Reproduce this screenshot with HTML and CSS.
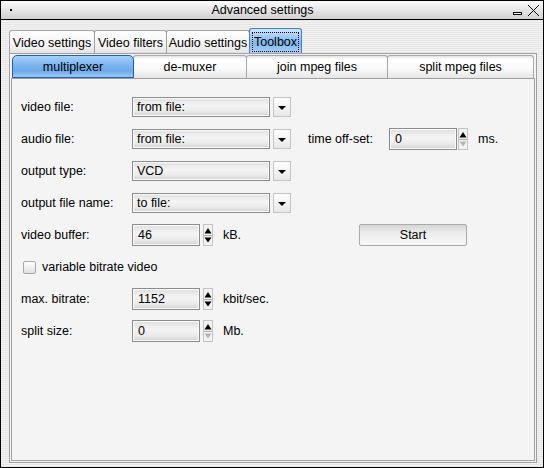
FILE: index.html
```html
<!DOCTYPE html>
<html>
<head>
<meta charset="utf-8">
<link rel="stylesheet" href="styles.css">
</head>
<body>
<div class="window">
  <div class="titlebar">
    <div class="tb-left"><span class="dot"></span></div>
    <div class="title">Advanced settings</div>
    <div class="tb-right">
      <svg width="30" height="18" viewBox="0 0 30 18">
        <rect x="3.5" y="11.5" width="8" height="2" fill="#fff" stroke="#000"/>
        <line x1="18" y1="4" x2="29" y2="15" stroke="#000" stroke-width="1"/>
        <line x1="29" y1="4" x2="18" y2="15" stroke="#000" stroke-width="1"/>
      </svg>
    </div>
  </div>
  <div class="body">
    <div class="tabs">
      <div class="tab t1">Video settings</div>
      <div class="tab t2">Video filters</div>
      <div class="tab t3">Audio settings</div>
      <div class="tab t4 sel"><span class="focus">Toolbox</span></div>
    </div>
    <div class="pane">
      <div class="subtabs">
        <div class="stab s1 sel">multiplexer</div>
        <div class="stab s2">de-muxer</div>
        <div class="stab s3">join mpeg files</div>
        <div class="stab s4">split mpeg files</div>
      </div>
      <div class="content">
        <div class="row">
          <div class="lbl">video file:</div>
          <div class="c1">
            <div class="field cfield">from file:</div>
            <div class="drop"><span class="tri"></span></div>
          </div>
        </div>
        <div class="row">
          <div class="lbl">audio file:</div>
          <div class="c1">
            <div class="field cfield">from file:</div>
            <div class="drop"><span class="tri"></span></div>
          </div>
          <div class="lbl2">time off-set:</div>
          <div class="field sfield">0</div>
          <svg class="spin tight" width="10" height="22" viewBox="0 0 10 22">
            <rect x="0.5" y="0.5" width="9" height="21" fill="#f2f2f2" stroke="#c4c4c4"/>
            <polygon points="1.5,9.5 5,4 8.5,9.5" fill="#000"/>
            <line x1="1" y1="11.5" x2="9" y2="11.5" stroke="#b0b0b0"/>
            <polygon points="1.5,13.5 8.5,13.5 5,18.5" fill="#b4b4b4"/>
          </svg>
          <div class="unit">ms.</div>
        </div>
        <div class="row">
          <div class="lbl">output type:</div>
          <div class="c1">
            <div class="field cfield">VCD</div>
            <div class="drop"><span class="tri"></span></div>
          </div>
        </div>
        <div class="row">
          <div class="lbl">output file name:</div>
          <div class="c1">
            <div class="field cfield">to file:</div>
            <div class="drop"><span class="tri"></span></div>
          </div>
        </div>
        <div class="row">
          <div class="lbl">video buffer:</div>
          <div class="c1">
            <div class="field sfield">46</div>
            <svg class="spin" width="10" height="22" viewBox="0 0 10 22">
              <rect x="0.5" y="0.5" width="9" height="21" fill="#f2f2f2" stroke="#c4c4c4"/>
              <polygon points="1.5,9.5 5,4 8.5,9.5" fill="#000"/>
              <line x1="1" y1="11.5" x2="9" y2="11.5" stroke="#b0b0b0"/>
              <polygon points="1.5,13.5 8.5,13.5 5,18.5" fill="#000"/>
            </svg>
            <div class="unit">kB.</div>
          </div>
          <div class="start">Start</div>
        </div>
        <div class="row">
          <span class="check"></span>
          <span>variable bitrate video</span>
        </div>
        <div class="row">
          <div class="lbl">max. bitrate:</div>
          <div class="field sfield">1152</div>
          <svg class="spin" width="10" height="22" viewBox="0 0 10 22">
            <rect x="0.5" y="0.5" width="9" height="21" fill="#f2f2f2" stroke="#c4c4c4"/>
            <polygon points="1.5,9.5 5,4 8.5,9.5" fill="#000"/>
            <line x1="1" y1="11.5" x2="9" y2="11.5" stroke="#b0b0b0"/>
            <polygon points="1.5,13.5 8.5,13.5 5,18.5" fill="#000"/>
          </svg>
          <div class="unit">kbit/sec.</div>
        </div>
        <div class="row">
          <div class="lbl">split size:</div>
          <div class="field sfield">0</div>
          <svg class="spin" width="10" height="22" viewBox="0 0 10 22">
            <rect x="0.5" y="0.5" width="9" height="21" fill="#f2f2f2" stroke="#c4c4c4"/>
            <polygon points="1.5,9.5 5,4 8.5,9.5" fill="#000"/>
            <line x1="1" y1="11.5" x2="9" y2="11.5" stroke="#b0b0b0"/>
            <polygon points="1.5,13.5 8.5,13.5 5,18.5" fill="#b4b4b4"/>
          </svg>
          <div class="unit">Mb.</div>
        </div>
      </div>
    </div>
  </div>
</div>
</body>
</html>
```
FILE: styles.css
```css
html, body {
  margin: 0;
  padding: 0;
}
body {
  font-family: "Liberation Sans", Arial, sans-serif;
  font-size: 12.5px;
  color: #000;
}
.window {
  width: 544px;
  height: 468px;
  box-sizing: border-box;
  border: 1px solid #000;
  display: flex;
  flex-direction: column;
  background: repeating-linear-gradient(180deg, #f3f3f3 0 1px, #e5e5e5 1px 2px);
}
.titlebar {
  height: 18px;
  border-bottom: 1px solid #000;
  background: linear-gradient(#fcfcfc, #d0d0d0);
  display: flex;
  align-items: center;
  flex: none;
}
.tb-left {
  width: 20px;
  display: flex;
  align-items: center;
}
.dot {
  width: 2px;
  height: 2px;
  background: #000;
  margin-left: 9px;
}
.title {
  flex: 1;
  text-align: center;
  line-height: 18px;
}
.tb-right {
  width: 39px;
  height: 18px;
  display: flex;
  justify-content: flex-end;
  padding-right: 3px;
  box-sizing: border-box;
}
.tb-right svg {
  display: block;
}
.body {
  flex: 1;
  display: flex;
  flex-direction: column;
  padding: 8px 6px 4px 8px;
  min-height: 0;
}
.tabs {
  display: flex;
  align-items: flex-end;
  height: 25px;
  flex: none;
}
.tab {
  height: 23px;
  box-sizing: border-box;
  border: 1px solid #a0a0a0;
  border-bottom: none;
  border-radius: 3px 3px 0 0;
  background: linear-gradient(#ffffff, #f4f4f4 60%, #e4e4e4);
  display: flex;
  align-items: center;
  justify-content: center;
  margin-right: -1px;
  padding-top: 1px;
}
.t1 { width: 86px; }
.t2 { width: 73px; }
.t3 { width: 84px; }
.t4 { width: 53px; }
.tab.sel {
  height: 25px;
  border-color: #3f7fd6;
  background: linear-gradient(#d4e8fd, #a2ccf6 30%, #80b8f0 60%, #a8d2fa);
  position: relative;
}
.focus {
  border: 1px dotted #000;
  padding: 2px 1px 2px 1px;
  line-height: 14px;
}
.pane {
  flex: 1;
  border: 1px solid #a0a0a0;
  padding: 1px;
  background: #f4f4f4;
  display: flex;
  flex-direction: column;
  min-height: 0;
}
.subtabs {
  display: flex;
  height: 23px;
  padding-left: 1px;
  flex: none;
}
.stab {
  height: 23px;
  box-sizing: border-box;
  border: 1px solid #a8a8a8;
  border-bottom: none;
  border-radius: 3px 3px 0 0;
  background: linear-gradient(#e0e0e0, #ffffff 3px, #fbfbfb 55%, #e6e6e6);
  display: flex;
  align-items: center;
  justify-content: center;
  margin-right: -1px;
}
.s1 { width: 122px; }
.s2 { width: 114px; }
.s3 { width: 142px; }
.s4 { width: 147px; }
.stab.sel {
  border: 1px solid #1f5bc4;
  border-radius: 5px 5px 0 0;
  background: linear-gradient(#a8d0f8, #7ab4ef 45%, #6ea8ea 70%, #9ccaf6);
  position: relative;
  z-index: 1;
}
.content {
  flex: 1;
  border: 1px solid #a0a0a0;
  padding: 17px 0 0 9px;
  display: flex;
  flex-direction: column;
  gap: 10px;
}
.row {
  display: flex;
  align-items: center;
  height: 22px;
}
.lbl {
  width: 111px;
  flex: none;
}
.c1 {
  width: 160px;
  display: flex;
  align-items: center;
  flex: none;
}
.field {
  box-sizing: border-box;
  border: 1px solid #8c8c8c;
  box-shadow: inset 0 0 0 1px #fbfbfb;
  background: linear-gradient(#dedede, #f4f4f4 40%, #ececec 70%, #d4d4d4);
  padding-left: 4px;
  display: flex;
  align-items: center;
  flex: none;
}
.cfield {
  width: 138px;
  height: 20px;
}
.sfield {
  width: 68px;
  height: 22px;
  padding-left: 5px;
}
.drop {
  width: 18px;
  height: 20px;
  box-sizing: border-box;
  margin-left: 3px;
  border: 1px solid #c4c4c4;
  background: linear-gradient(#ffffff, #e8e8e8);
  display: flex;
  align-items: center;
  justify-content: center;
}
.tri {
  width: 0;
  height: 0;
  border-left: 4px solid transparent;
  border-right: 4px solid transparent;
  border-top: 4px solid #000;
  margin-top: 1px;
}
.spin {
  display: block;
  margin-left: 3px;
  flex: none;
}
.spin.tight {
  margin-left: 1px;
}
.unit {
  margin-left: 10px;
}
.lbl2 {
  width: 81px;
  margin-left: 16px;
  flex: none;
}
.start {
  width: 108px;
  height: 22px;
  box-sizing: border-box;
  margin-left: 67px;
  border: 1px solid #ababab;
  border-radius: 2px;
  background: linear-gradient(#d6d6d6, #ececec 40%, #f8f8f8);
  display: flex;
  align-items: center;
  justify-content: center;
}
.check {
  width: 13px;
  height: 13px;
  box-sizing: border-box;
  border: 1px solid #a8a8a8;
  border-radius: 2px;
  background: linear-gradient(#ffffff, #e0e0e0);
  margin-left: 2px;
  margin-right: 6px;
}
```
